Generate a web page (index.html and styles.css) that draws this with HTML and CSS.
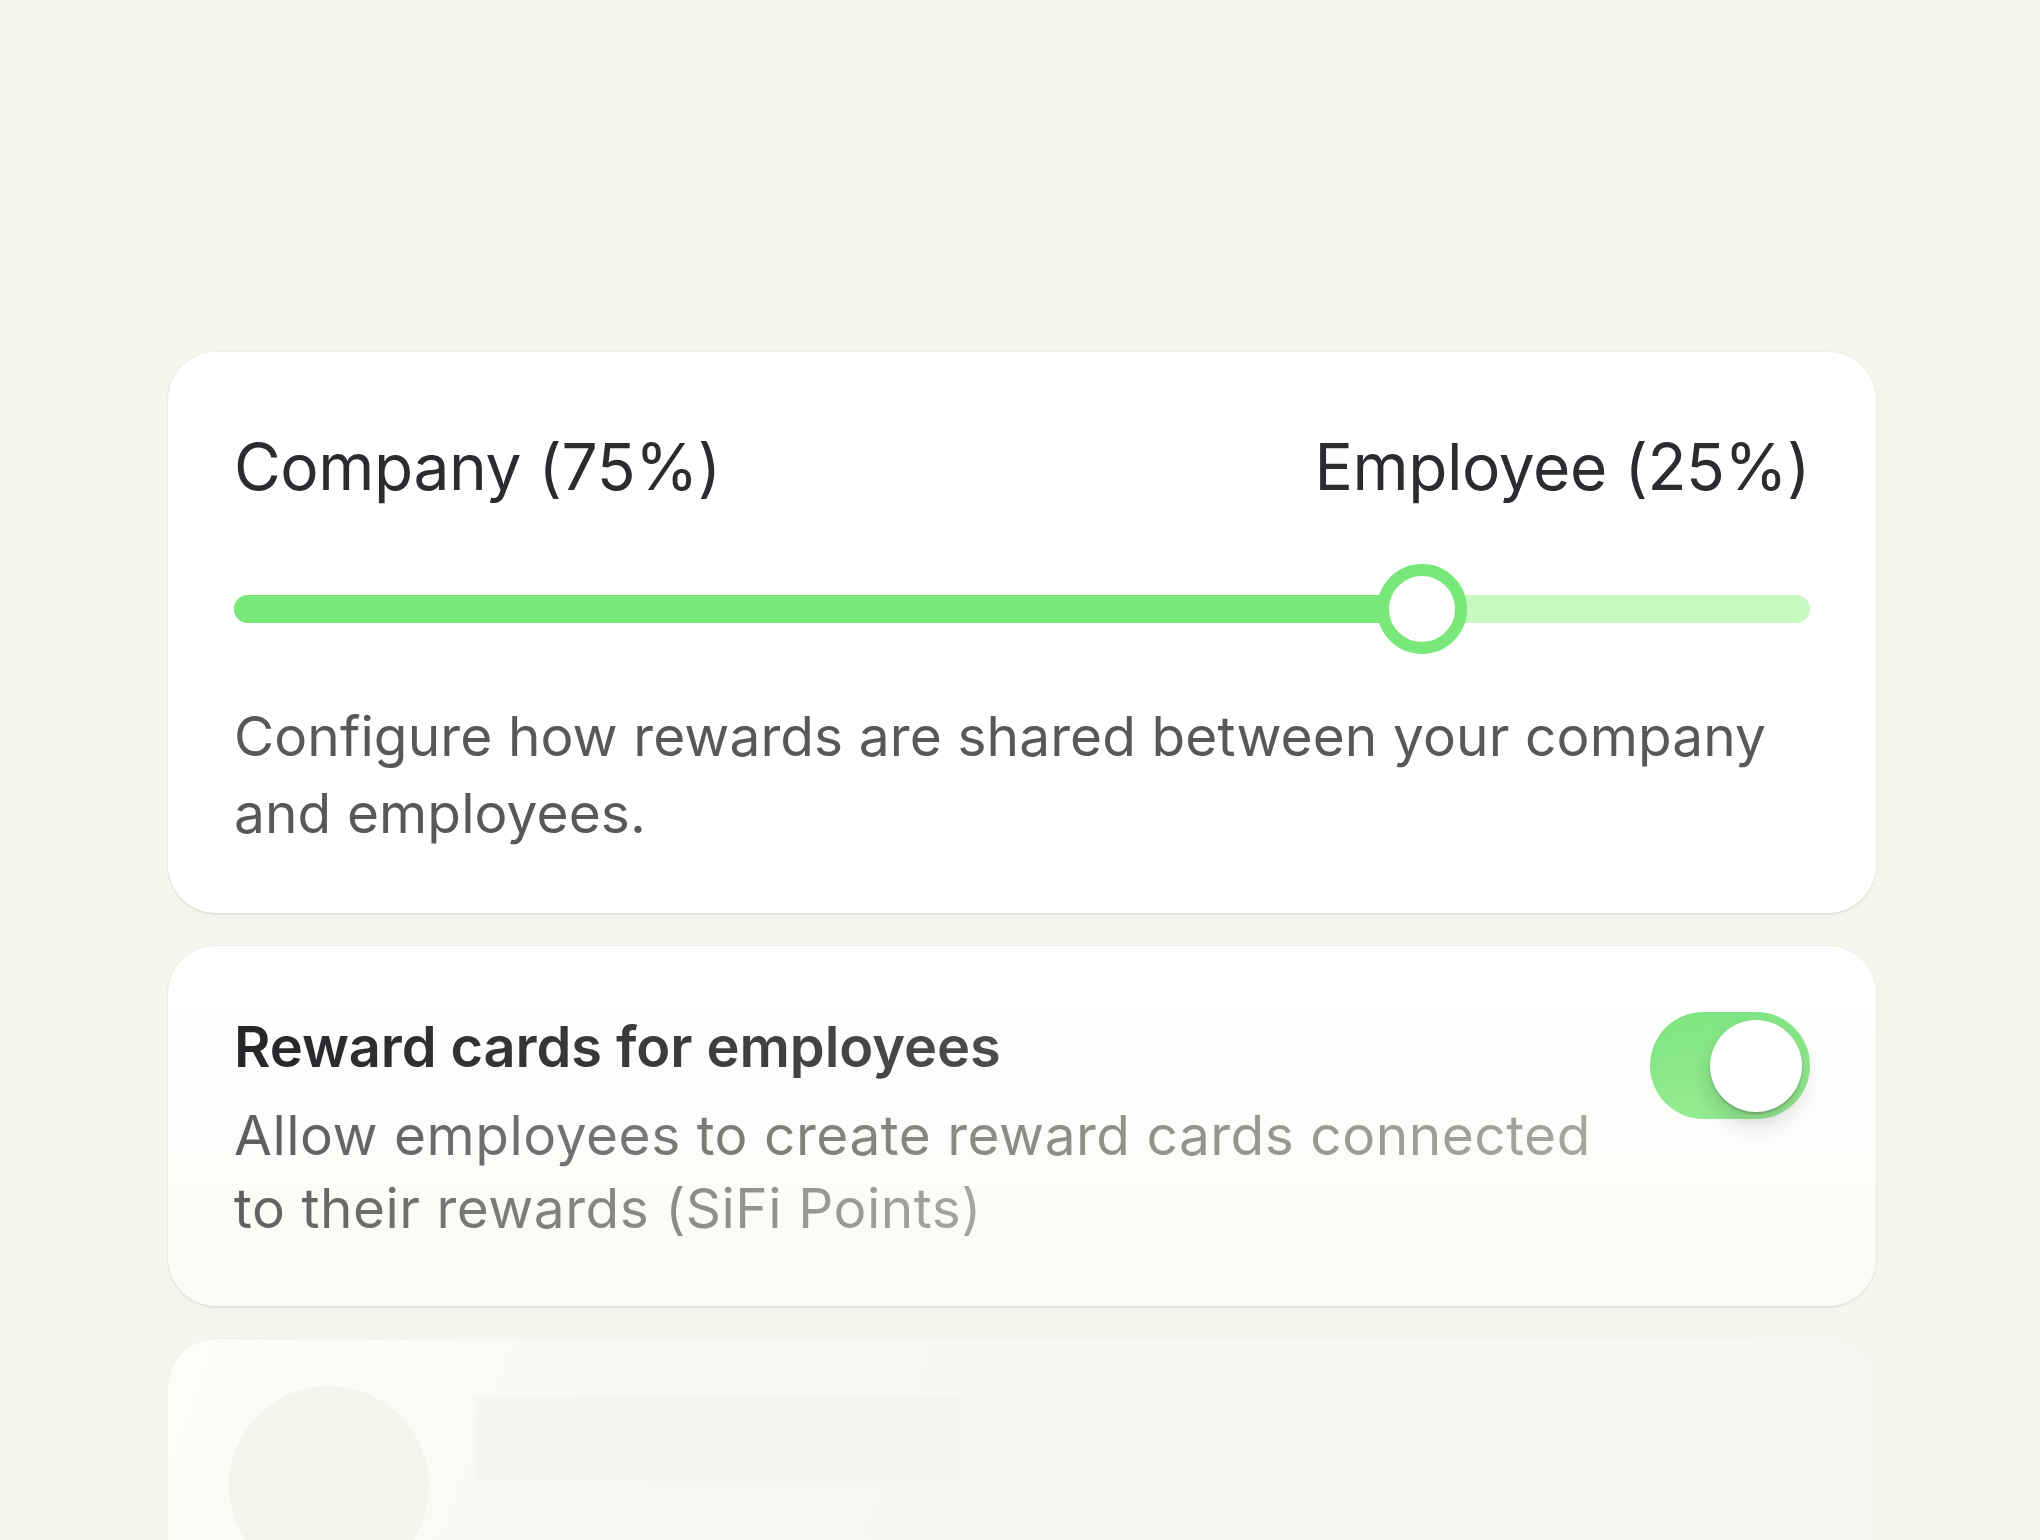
FILE: index.html
```html
<!DOCTYPE html>
<html lang="en">
<head>
<meta charset="utf-8">
<title>Reward settings</title>
<link rel="stylesheet" href="styles.css">
</head>
<body>
<main class="stack">
  <section class="card card-split">
    <div class="split-head">
      <span class="split-label">Company (75%)</span>
      <span class="split-label">Employee (25%)</span>
    </div>
    <div class="slider">
      <div class="track">
        <div class="track-fill" style="width:75.4%"></div>
      </div>
      <div class="thumb" style="left:75.4%"></div>
    </div>
    <p class="split-desc">Configure how rewards are shared between your company and employees.</p>
  </section>

  <section class="card card-toggle">
    <div class="toggle-text">
      <h2 class="toggle-title"><span class="fade-dark">Reward cards for employees</span></h2>
      <p class="toggle-desc"><span class="fade-gray">Allow employees to create reward cards connected to their rewards (SiFi Points)</span></p>
    </div>
    <div class="switch">
      <div class="switch-knob"></div>
    </div>
  </section>

  <section class="card card-ghost">
    <div class="ghost-avatar"></div>
    <div class="ghost-lines">
      <div class="ghost-bar"></div>
    </div>
  </section>
</main>
</body>
</html>
```

FILE: styles.css
```css
html, body {
  margin: 0;
  padding: 0;
}

body {
  background: #f5f5ee;
  font-family: Inter, "Noto Sans", "Liberation Sans", sans-serif;
  height: 1540px;
  overflow: hidden;
}

.stack {
  width: 1708px;
  padding: 352px 0 0 168px;
  display: flex;
  flex-direction: column;
  gap: 33px;
}

.card {
  border-radius: 48px;
  box-sizing: border-box;
  box-shadow: 0 0 0 1px rgba(60, 60, 40, 0.035), 0 2px 2px rgba(60, 60, 40, 0.07);
}

/* Card 1 */
.card-split {
  background: #ffffff;
  padding: 76px 66px 59px 66px;
  height: 561px;
}

.split-head {
  display: flex;
  justify-content: space-between;
  align-items: baseline;
}

.split-label {
  font-size: 64px;
  line-height: 77px;
  font-weight: 400;
  color: #2b2b30;
  letter-spacing: -0.4px;
}

.slider {
  position: relative;
  height: 90px;
  margin-top: 59px;
  display: flex;
  align-items: center;
}

.track {
  width: 100%;
  height: 28px;
  border-radius: 14px;
  background: #c7f9c1;
  overflow: hidden;
}

.track-fill {
  height: 100%;
  background: #77e879;
}

.thumb {
  position: absolute;
  top: 0;
  width: 90px;
  height: 90px;
  box-sizing: border-box;
  border-radius: 50%;
  border: 12px solid #77e879;
  background: #ffffff;
  transform: translateX(-50%);
}

.split-desc {
  margin: 44px 0 0 0;
  font-size: 55px;
  line-height: 77px;
  color: #585858;
  letter-spacing: 0.1px;
}

/* Card 2 */
.card-toggle {
  background: linear-gradient(180deg, #ffffff 0%, #fafaf6 100%);
  padding: 66px 66px 59px 66px;
  height: 360px;
  display: flex;
  align-items: flex-start;
  gap: 40px;
}

.toggle-text {
  flex: 1;
  padding-top: 5px;
}

.toggle-title {
  margin: 0;
  font-size: 56px;
  line-height: 60px;
  font-weight: 600;
  letter-spacing: -0.1px;
}

.fade-dark,
.fade-gray {
  -webkit-box-decoration-break: clone;
  box-decoration-break: clone;
  -webkit-background-clip: text;
  background-clip: text;
  color: transparent;
}

.fade-dark {
  background-image: linear-gradient(90deg, #26262a 0%, #4c4c4c 100%);
}

.fade-gray {
  background-image: linear-gradient(90deg, #5e5e5e 0%, #8a8a86 55%, #a6a6a0 100%);
}

.toggle-desc {
  margin: 22px 0 0 0;
  font-size: 55px;
  line-height: 73px;
  font-weight: 400;
  letter-spacing: 0.5px;
}

.switch {
  flex: none;
  width: 160px;
  height: 107px;
  border-radius: 54px;
  background: linear-gradient(165deg, #7de47f 0%, #8fea8d 60%, #9aee97 100%);
  display: flex;
  align-items: center;
  justify-content: flex-end;
  padding: 0 8px;
  box-sizing: border-box;
}

.switch-knob {
  width: 92px;
  height: 92px;
  border-radius: 50%;
  background: #ffffff;
  box-shadow: 0 2px 2px rgba(0, 0, 0, 0.18), 0 12px 22px rgba(0, 0, 0, 0.16);
}

/* Card 3 (faded ghost, cut by the viewport) */
.card-ghost {
  height: 202px;
  border-radius: 48px 48px 0 0;
  background: linear-gradient(110deg, #fcfcf9 0%, #f8f8f3 30%, #f6f6f0 100%);
  padding: 47px 66px 0 61px;
  display: flex;
  gap: 47px;
  overflow: hidden;
  box-shadow: 0 0 0 1px rgba(60, 60, 40, 0.02);
}

.ghost-avatar {
  flex: none;
  width: 200px;
  height: 200px;
  border-radius: 50%;
  background: #f4f4ed;
}

.ghost-lines {
  flex: 1;
  padding-top: 11px;
}

.ghost-bar {
  width: 484px;
  height: 84px;
  background: #f5f5ef;
  border-radius: 4px;
}
```
